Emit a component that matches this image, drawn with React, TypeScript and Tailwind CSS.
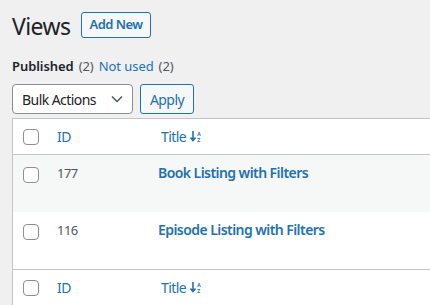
import React from "react";

const font = { fontFamily: '"Noto Sans", "Open Sans", sans-serif' };

function Check() {
  return <span className="block h-4 w-4 rounded-[4px] border border-[#8c8f94] bg-white" />;
}

function SortIcon() {
  return (
    <span className="ml-1 inline-flex items-center">
      <svg width="6" height="11" viewBox="0 0 6 11" className="text-[#2271b1]">
        <path d="M3 0v9M0.5 6.5L3 9.5l2.5-3" fill="none" stroke="currentColor" strokeWidth="1.6" />
      </svg>
      <span className="ml-[1px] flex flex-col text-[5px] font-bold leading-[6px] tracking-normal">
        <span>A</span>
        <span>Z</span>
      </span>
    </span>
  );
}

function HeadRow({ top }: { top?: boolean }) {
  return (
    <div
      className={`flex h-[36px] items-center bg-white text-[14px] text-[#2271b1] ${
        top ? "border-b" : "border-t"
      } border-[#c3c4c7]`}
    >
      <div className="w-[35px] pl-[10px]">
        <Check />
      </div>
      <div className="w-[104px] pl-[9px]">ID</div>
      <div className="flex items-center pl-[9px]">
        Title
        <SortIcon />
      </div>
    </div>
  );
}

const rows = [
  { id: 177, title: "Book Listing with Filters", bg: "bg-[#f6f7f7]" },
  { id: 116, title: "Episode Listing with Filters", bg: "bg-white" },
];

export default function App() {
  return (
    <div
      className="h-[305px] w-[430px] overflow-hidden bg-[#f0f0f1] tracking-[-0.035em] text-[#1d2327]"
      style={font}
    >
      <div className="pl-3 pt-[10px]">
        <div className="flex items-center">
          <h1 className="-mb-[2px] mt-[2px] text-[23px] leading-[29px] font-normal">Views</h1>
          <button className="ml-[10px] h-[26px] rounded-[3px] border border-[#2271b1] bg-[#f6f7f7] px-2 text-[13px] font-semibold text-[#2271b1]">
            Add New
          </button>
        </div>

        <div className="mt-[17px] flex items-center text-[13px] leading-5 tracking-[-0.005em]">
          <span className="font-semibold">Published</span>
          <span className="ml-[5px] text-[#50575e]">(2)</span>
          <span className="ml-[5px] text-[#2271b1]">Not used</span>
          <span className="ml-[5px] text-[#50575e]">(2)</span>
        </div>

        <div className="mt-[8px] flex items-center gap-[7px]">
          <div className="flex h-[30px] w-[121px] items-center justify-between rounded-[4px] border border-[#8c8f94] bg-white pl-[9px] pr-[9px] text-[14px]">
            <span>Bulk Actions</span>
            <svg width="12" height="8" viewBox="0 0 12 8">
              <path d="M1 1.5l5 5 5-5" fill="none" stroke="#50575e" strokeWidth="1.5" />
            </svg>
          </div>
          <button className="h-[30px] w-[54px] rounded-[3px] border border-[#2271b1] bg-[#f6f7f7] text-[14px] text-[#2271b1]">
            Apply
          </button>
        </div>

        <div className="mt-[4px] w-[470px] border border-[#c3c4c7] bg-white">
          <HeadRow top />
          {rows.map((r) => (
            <div key={r.id} className={`flex h-[57px] items-start pt-[10px] ${r.bg}`}>
              <div className="w-[35px] pl-[10px] pt-[2px]">
                <Check />
              </div>
              <div className="w-[104px] pl-[9px] text-[13px] leading-4 text-[#50575e]">{r.id}</div>
              <div className="pl-[6px] text-[14px] font-semibold leading-4 text-[#2271b1]">{r.title}</div>
            </div>
          ))}
          <HeadRow />
        </div>
      </div>
    </div>
  );
}
